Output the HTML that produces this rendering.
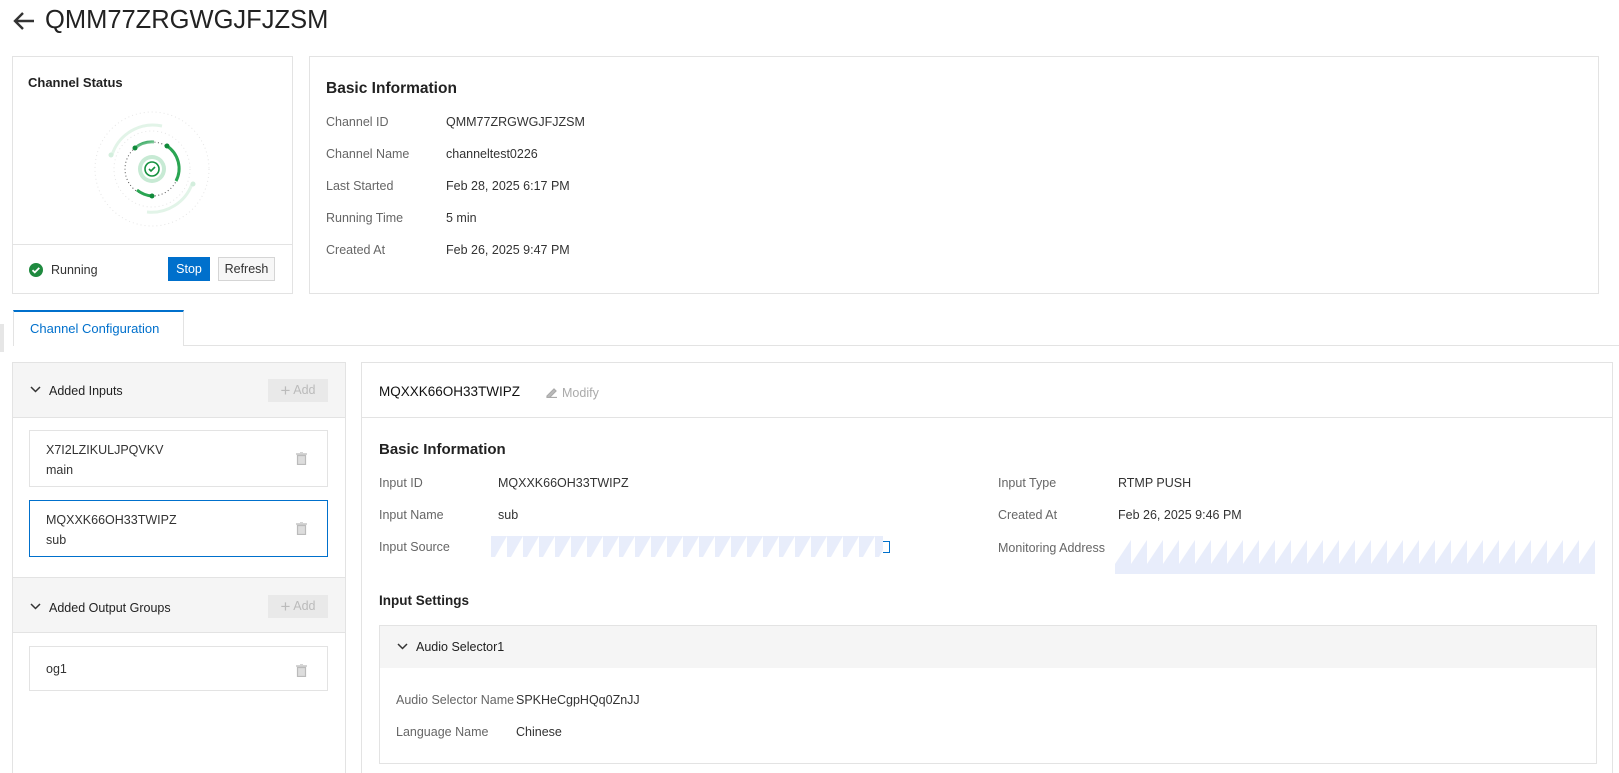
<!DOCTYPE html>
<html><head><meta charset="utf-8">
<style>
*{margin:0;padding:0;box-sizing:border-box}
html,body{width:1619px;height:773px;overflow:hidden}
body{background:#fff;font-family:"Liberation Sans",sans-serif;color:#333;position:relative}
.a{position:absolute}
.t{position:absolute;white-space:nowrap;font-size:12.5px;line-height:16px;transform:translateY(-8px)}
.lb{color:#666}
.card{position:absolute;border:1px solid #e3e3e3;background:#fff}
.h{font-weight:bold;color:#222}
</style></head><body>
<svg class="a" style="left:12px;top:10px" width="26" height="22" viewBox="0 0 26 22"><path d="M22 11H4M11 3L3 11l8 8" stroke="#333" stroke-width="2.4" fill="none"/></svg>
<div class="a" style="left:45px;top:4px;font-size:25.5px;line-height:32px;color:#222">QMM77ZRGWGJFJZSM</div>

<div class="card" style="left:12px;top:56px;width:281px;height:238px"></div>
<div class="a" style="left:12px;top:244px;width:281px;height:1px;background:#e3e3e3"></div>
<div class="t h" style="left:28px;top:83px;font-size:13px">Channel Status</div>
<svg class="a" style="left:92px;top:109px" width="120" height="120" viewBox="-60 -60 120 120">
<defs><linearGradient id="g1" x1="0" y1="0" x2="1" y2="1"><stop offset="0" stop-color="#1a9a48"/><stop offset="1" stop-color="#cfeedb"/></linearGradient></defs>
<circle r="57" fill="none" stroke="#e6e6e6" stroke-width="1" stroke-dasharray="1 3"/>
<circle r="38" fill="none" stroke="#e6e6e6" stroke-width="1" stroke-dasharray="1 3"/>
<path d="M-40 -14A43 43 0 0 1 10 -43" stroke="#e2f4e8" stroke-width="3" fill="none"/>
<path d="M40 15A43 43 0 0 1 -5 43" stroke="#e2f4e8" stroke-width="3" fill="none"/>
<circle cx="-41" cy="-14" r="2.5" fill="#d3eedd"/><circle cx="41" cy="15" r="2.5" fill="#d3eedd"/>
<circle r="27" fill="none" stroke="#555" stroke-width="1" stroke-dasharray="1 2.5"/>
<path d="M-17 -21A27 27 0 0 1 2 -27" stroke="url(#g1)" stroke-width="3" fill="none"/>
<path d="M15 -23A27 27 0 0 1 24 12" stroke="#2aa552" stroke-width="3" fill="none"/>
<path d="M-15 21A27 27 0 0 0 0 27" stroke="#2aa552" stroke-width="3" fill="none"/>
<circle cx="-17" cy="-21" r="2.5" fill="#108a3a"/><circle cx="15" cy="-23" r="2.5" fill="#108a3a"/><circle cx="0" cy="27" r="2.5" fill="#108a3a"/>
<circle r="14" fill="#c7ead4"/><circle r="10" fill="#fff"/>
<circle r="7" fill="none" stroke="#15913f" stroke-width="1.6"/>
<path d="M-3 0l2 2 4-4" stroke="#15913f" stroke-width="1.6" fill="none"/>
</svg>
<svg class="a" style="left:28px;top:262px" width="16" height="16" viewBox="0 0 16 16"><circle cx="8" cy="8" r="7" fill="#1f8a3f"/><path d="M4.5 8.2l2.3 2.2 4.5-4.5" stroke="#fff" stroke-width="1.8" fill="none"/></svg>
<div class="t" style="left:51px;top:270px;color:#333">Running</div>
<div class="a" style="left:168px;top:257px;width:42px;height:24px;background:#0070cc;color:#fff;font-size:12.5px;line-height:24px;text-align:center">Stop</div>
<div class="a" style="left:218px;top:257px;width:57px;height:24px;border:1px solid #d5d5d5;background:#f7f7f7;font-size:12.5px;line-height:22px;text-align:center">Refresh</div>

<div class="card" style="left:309px;top:56px;width:1290px;height:238px"></div>
<div class="t h" style="left:326px;top:89px;font-size:15.5px;line-height:20px;transform:translateY(-10px)">Basic Information</div>
<div class="t lb" style="left:326px;top:122px">Channel ID</div><div class="t" style="left:446px;top:122px">QMM77ZRGWGJFJZSM</div>
<div class="t lb" style="left:326px;top:154px">Channel Name</div><div class="t" style="left:446px;top:154px">channeltest0226</div>
<div class="t lb" style="left:326px;top:186px">Last Started</div><div class="t" style="left:446px;top:186px">Feb 28, 2025 6:17 PM</div>
<div class="t lb" style="left:326px;top:218px">Running Time</div><div class="t" style="left:446px;top:218px">5 min</div>
<div class="t lb" style="left:326px;top:250px">Created At</div><div class="t" style="left:446px;top:250px">Feb 26, 2025 9:47 PM</div>

<div class="a" style="left:0;top:324px;width:4px;height:28px;background:#e6e6e6"></div>
<div class="a" style="left:184px;top:345px;width:1435px;height:1px;background:#e3e3e3"></div>
<div class="a" style="left:13px;top:310px;width:171px;height:36px;border:1px solid #e3e3e3;border-top:2px solid #0070cc;border-bottom:none;background:#fff"></div>
<div class="t" style="left:30px;top:329px;color:#0070cc;font-size:13px">Channel Configuration</div>

<div class="card" style="left:12px;top:362px;width:334px;height:411px;border-bottom:none"></div>
<div class="a" style="left:13px;top:363px;width:332px;height:55px;background:#f5f5f5;border-bottom:1px solid #e3e3e3"></div>
<svg class="a" style="left:30px;top:386px" width="11" height="8"><path d="M1 1l4.5 4.5L10 1" stroke="#333" stroke-width="1.5" fill="none"/></svg>
<div class="t" style="left:49px;top:391px;color:#222">Added Inputs</div>
<div class="a" style="left:268px;top:379px;width:60px;height:23px;background:#e9e9e9;color:#bbb;font-size:12.5px;line-height:23px;text-align:center"><span style="font-size:17px;vertical-align:-2px">+</span> Add</div>
<div class="a" style="left:29px;top:430px;width:299px;height:57px;border:1px solid #e3e3e3"></div>
<div class="t" style="left:46px;top:450px">X7I2LZIKULJPQVKV</div><div class="t" style="left:46px;top:470px">main</div>
<div class="a" style="left:29px;top:500px;width:299px;height:57px;border:1px solid #0070cc"></div>
<div class="t" style="left:46px;top:520px">MQXXK66OH33TWIPZ</div><div class="t" style="left:46px;top:540px">sub</div>
<div class="a" style="left:13px;top:577px;width:332px;height:56px;background:#f5f5f5;border-top:1px solid #e3e3e3;border-bottom:1px solid #e3e3e3"></div>
<svg class="a" style="left:30px;top:603px" width="11" height="8"><path d="M1 1l4.5 4.5L10 1" stroke="#333" stroke-width="1.5" fill="none"/></svg>
<div class="t" style="left:49px;top:608px;color:#222">Added Output Groups</div>
<div class="a" style="left:268px;top:595px;width:60px;height:23px;background:#e9e9e9;color:#bbb;font-size:12.5px;line-height:23px;text-align:center"><span style="font-size:17px;vertical-align:-2px">+</span> Add</div>
<div class="a" style="left:29px;top:646px;width:299px;height:45px;border:1px solid #e3e3e3"></div>
<div class="t" style="left:46px;top:669px">og1</div>
<svg class="a" style="left:296px;top:452px" width="11" height="13"><path d="M0 2h11M4 0h3M1.5 3.5h8v9h-8z" stroke="#bbb" stroke-width="1.2" fill="#ddd"/></svg>
<svg class="a" style="left:296px;top:522px" width="11" height="13"><path d="M0 2h11M4 0h3M1.5 3.5h8v9h-8z" stroke="#bbb" stroke-width="1.2" fill="#ddd"/></svg>
<svg class="a" style="left:296px;top:664px" width="11" height="13"><path d="M0 2h11M4 0h3M1.5 3.5h8v9h-8z" stroke="#bbb" stroke-width="1.2" fill="#ddd"/></svg>

<div class="card" style="left:361px;top:362px;width:1252px;height:411px;border-bottom:none"></div>
<div class="a" style="left:362px;top:417px;width:1250px;height:1px;background:#e3e3e3"></div>
<div class="t" style="left:379px;top:392px;font-size:13.5px;color:#111">MQXXK66OH33TWIPZ</div>
<svg class="a" style="left:546px;top:386px" width="12" height="12"><path d="M1 10l7-7 2 2-7 7H1zM1 11.5h10" stroke="#aaa" stroke-width="1.2" fill="#bbb"/></svg>
<div class="t" style="left:562px;top:393px;color:#aaa">Modify</div>
<div class="t h" style="left:379px;top:450px;font-size:15px;line-height:20px;transform:translateY(-10px)">Basic Information</div>
<div class="t lb" style="left:379px;top:483px">Input ID</div><div class="t" style="left:498px;top:483px">MQXXK66OH33TWIPZ</div>
<div class="t lb" style="left:379px;top:515px">Input Name</div><div class="t" style="left:498px;top:515px">sub</div>
<div class="t lb" style="left:379px;top:547px">Input Source</div>
<svg class="a" style="left:491px;top:536px" width="392" height="21"><defs><pattern id="p" width="16" height="21" patternUnits="userSpaceOnUse"><rect width="16" height="21" fill="#e8edfb"/><path d="M16 0L4 21H16z" fill="#fff"/></pattern></defs><rect width="392" height="21" fill="url(#p)"/></svg>
<div class="a" style="left:883px;top:541px;width:7px;height:12px;border:1.5px solid #0070cc;border-left:none"></div>
<div class="t lb" style="left:998px;top:483px">Input Type</div><div class="t" style="left:1118px;top:483px">RTMP PUSH</div>
<div class="t lb" style="left:998px;top:515px">Created At</div><div class="t" style="left:1118px;top:515px">Feb 26, 2025 9:46 PM</div>
<div class="t lb" style="left:998px;top:548px">Monitoring Address</div>
<svg class="a" style="left:1115px;top:540px" width="480" height="34"><defs><pattern id="q" width="16" height="34" patternUnits="userSpaceOnUse"><rect width="16" height="34" fill="#e8edfb"/><path d="M16 0L0 24V0z" fill="#fff"/></pattern></defs><rect width="480" height="34" fill="url(#q)"/></svg>
<div class="t h" style="left:379px;top:601px;font-size:13.5px">Input Settings</div>
<div class="a" style="left:379px;top:625px;width:1218px;height:139px;border:1px solid #e3e3e3"></div>
<div class="a" style="left:380px;top:626px;width:1216px;height:42px;background:#f5f5f5"></div>
<svg class="a" style="left:397px;top:643px" width="11" height="8"><path d="M1 1l4.5 4.5L10 1" stroke="#333" stroke-width="1.5" fill="none"/></svg>
<div class="t" style="left:416px;top:647px;color:#222">Audio Selector1</div>
<div class="t lb" style="left:396px;top:700px">Audio Selector Name</div><div class="t" style="left:516px;top:700px">SPKHeCgpHQq0ZnJJ</div>
<div class="t lb" style="left:396px;top:732px">Language Name</div><div class="t" style="left:516px;top:732px">Chinese</div>
</body></html>
